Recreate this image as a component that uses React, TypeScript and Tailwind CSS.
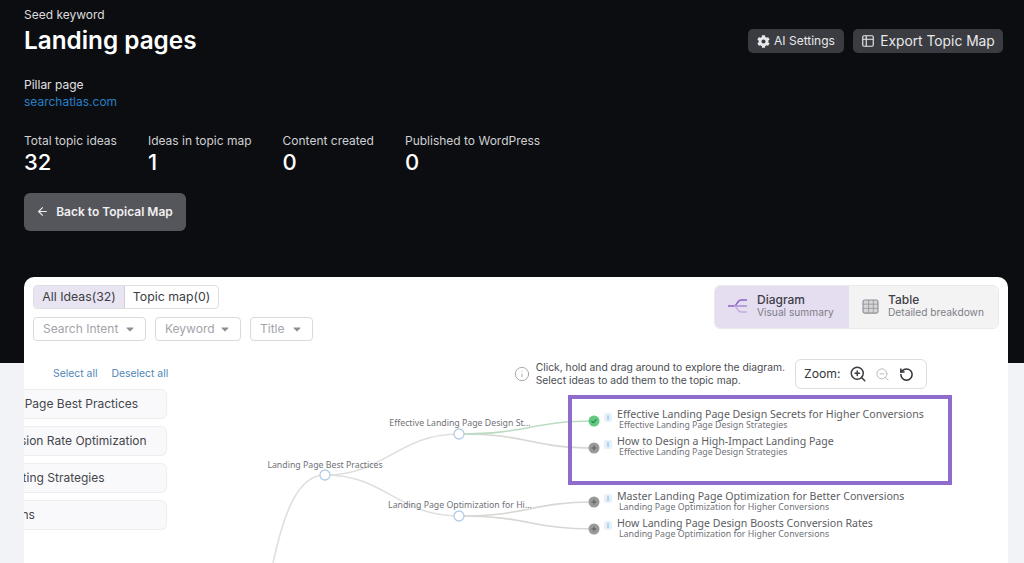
import { ArrowLeft, Info, RotateCcw, Table2, ZoomIn, ZoomOut } from "lucide-react";
import { FaCaretDown, FaCog } from "react-icons/fa";

const STATS = [
  { label: "Total topic ideas", value: "32" },
  { label: "Ideas in topic map", value: "1" },
  { label: "Content created", value: "0" },
  { label: "Published to WordPress", value: "0" },
];

const CLUSTERS = [
  { name: "Landing Page Best Practices", offset: "-ml-[48px]" },
  { name: "Conversion Rate Optimization", offset: "-ml-[45px]" },
  { name: "Marketing Strategies", offset: "-ml-[37px]" },
  { name: "Campaigns", offset: "-ml-[53px]" },
];

const LEAVES = [
  { y: 421, textY: 421, title: "Effective Landing Page Design Secrets for Higher Conversions", sub: "Effective Landing Page Design Strategies", done: true },
  { y: 448, textY: 448, title: "How to Design a High-Impact Landing Page", sub: "Effective Landing Page Design Strategies", done: false },
  { y: 502, textY: 503, title: "Master Landing Page Optimization for Better Conversions", sub: "Landing Page Optimization for Higher Conversions", done: false },
  { y: 529, textY: 530, title: "How Landing Page Design Boosts Conversion Rates", sub: "Landing Page Optimization for Higher Conversions", done: false },
];

function Filter({ label, width }: { label: string; width: string }) {
  return (
    <div className={`flex h-6 items-center justify-between rounded-[4px] border border-[#d9d9de] px-[9px] text-[12px] text-[#a2a4aa] ${width}`}>
      {label}
      <FaCaretDown className="h-[12px] w-[12px] text-[#8d8f95]" />
    </div>
  );
}

function Diagram() {
  return (
    <svg viewBox="167 359 841 204" className="absolute left-0 top-0 h-[204px] w-[841px] font-['Noto_Sans',sans-serif]">
      <g fill="none" stroke="#dfe0dd" strokeWidth="1.6">
        <path d="M273 563C284 512 298 475 325 475" />
        <path d="M325 475C385 475 398 434 459 434" />
        <path d="M325 475C385 475 398 516 459 516" />
        <path d="M459 434C530 434 530 448 594 448" stroke="#d6d8d3" />
        <path d="M459 516C530 516 530 502 594 502" stroke="#d6d8d3" />
        <path d="M459 516C530 516 530 529 594 529" stroke="#d6d8d3" />
        <path d="M459 434C530 434 530 421 594 421" stroke="#bcdcc2" />
      </g>
      {[[325, 475], [459, 434], [459, 516]].map(([cx, cy]) => (
        <circle key={cx + "-" + cy} cx={cx} cy={cy} r="5" fill="#fff" stroke="#b4cde6" strokeWidth="1.3" />
      ))}
      <g fontSize="8.75" fill="#6f7278" textAnchor="middle">
        <text x="325" y="468">Landing Page Best Practices</text>
        <text x="460" y="426">Effective Landing Page Design St...</text>
        <text x="460" y="508">Landing Page Optimization for Hi...</text>
      </g>
      {LEAVES.map((leaf) => (
        <g key={leaf.title}>
          <circle cx="594" cy={leaf.y} r="5.5" fill={leaf.done ? "#62c981" : "#9a9a9a"} />
          {leaf.done ? (
            <path d={`M591.5 ${leaf.y}l1.8 1.8 3.2-3.4`} fill="none" stroke="#2b7a45" strokeWidth="1.1" />
          ) : (
            <path d={`M591.5 ${leaf.y}h5M594 ${leaf.y - 2.5}v5`} stroke="#5c5c5c" strokeWidth="1" />
          )}
          <rect x="604" y={leaf.y - 8} width="8" height="9" rx="2" fill="#e4f1fb" />
          <text x="608" y={leaf.y - 1} fontSize="7" fill="#4b93cf" textAnchor="middle">i</text>
          <text x="617" y={leaf.textY - 3} fontSize="10.6" fill="#5b5e63">{leaf.title}</text>
          <text x="619" y={leaf.textY + 7} fontSize="8.8" fill="#6f7277">{leaf.sub}</text>
        </g>
      ))}
    </svg>
  );
}

export default function App() {
  return (
    <div className="h-[563px] w-[1024px] overflow-hidden bg-[#f2f3f6] font-['Inter',sans-serif]">
      <div className="h-[363px] bg-[#0c0d11] pl-6 pr-[21px] pt-[7px] text-white">
        <div className="flex items-start justify-between">
          <div>
            <p className="text-[12px] leading-[15px] text-[#dcdcde]">Seed keyword</p>
            <h1 className="mt-[2px] text-[24.3px] font-semibold leading-[32px]">Landing pages</h1>
          </div>
          <div className="mt-[22px] flex gap-[9px]">
            <button className="flex h-6 w-[96px] items-center justify-center gap-[4px] rounded-[5px] bg-[#3b3c41] text-[12px] text-[#e8e8ea]">
              <FaCog className="h-[13px] w-[13px]" />
              AI Settings
            </button>
            <button className="flex h-6 w-[150px] items-center justify-center gap-[5px] rounded-[5px] bg-[#3b3c41] text-[13.8px] text-[#e8e8ea]">
              <Table2 className="h-[14px] w-[14px]" />
              Export Topic Map
            </button>
          </div>
        </div>
        <p className="mt-[21px] text-[12px] leading-[16px] text-[#e0e0e2]">Pillar page</p>
        <a className="mt-[1px] block text-[12px] leading-[16px] text-[#2a7fc4]">searchatlas.com</a>
        <div className="mt-[23px] flex gap-[31px]">
          {STATS.map((stat) => (
            <div key={stat.label}>
              <p className="text-[12px] leading-[16px] text-[#cfd0d3]">{stat.label}</p>
              <p className="text-[22px] font-medium leading-[26px]">{stat.value}</p>
            </div>
          ))}
        </div>
        <button className="mt-[18px] flex h-[38px] w-[162px] items-center justify-center gap-[7px] rounded-[6px] bg-[#55565b] pb-[1px] pr-[1px] text-[12px] font-semibold text-[#f0f0f1]">
          <ArrowLeft className="h-[13px] w-[13px]" />
          Back to Topical Map
        </button>
      </div>

      <div className="ml-6 -mt-[86px] flex h-[290px] w-[984px] flex-col overflow-hidden rounded-t-[10px] bg-white">
        <div className="flex justify-between px-[9px] pt-[8px]">
          <div>
            <div className="flex h-[24px] w-fit overflow-hidden rounded-[4px] border border-[#dedee3] text-[12.3px] text-[#3c3e44]">
              <span className="flex w-[91px] items-center justify-center border-r border-[#d3d0dd] bg-[#e8e4f1]">All Ideas(32)</span>
              <span className="flex w-[93px] items-center justify-center">Topic map(0)</span>
            </div>
            <div className="mt-[8px] flex gap-[9px]">
              <Filter label="Search Intent" width="w-[113px]" />
              <Filter label="Keyword" width="w-[86px]" />
              <Filter label="Title" width="w-[63px]" />
            </div>
          </div>
          <div className="flex h-[44px] w-[285px] overflow-hidden rounded-[6px] border border-[#eaeaed]">
            <div className="flex w-[134px] items-center gap-[9px] bg-[#e5ddf0] pb-[2px] pl-[13px]">
              <svg viewBox="0 0 20 14" className="h-[14px] w-[20px]" fill="none" stroke="#8a63c4" strokeWidth="1.4">
                <path d="M0 7h6c3 0 3-6 7-6h6" />
                <path d="M6 7h13" stroke="#a98bd6" />
                <path d="M6 7c3 0 3 6 7 6h6" stroke="#c3aee2" />
              </svg>
              <div>
                <p className="text-[12px] font-medium leading-[13px] text-[#3e3f47]">Diagram</p>
                <p className="text-[10.2px] leading-[13px] text-[#7d7e88]">Visual summary</p>
              </div>
            </div>
            <div className="flex flex-1 items-center gap-[9px] bg-[#f3f3f4] pb-[2px] pl-[13px]">
              <svg viewBox="0 0 18 16" className="h-[15px] w-[17px]" fill="#d6d6d8" stroke="#8f8f93" strokeWidth="1.2">
                <rect x="1" y="1" width="16" height="14" rx="2" />
                <path d="M1 5.5h16M1 10h16M7 1v14M12 1v14" strokeWidth="0.8" />
              </svg>
              <div>
                <p className="text-[12px] font-medium leading-[13px] text-[#3e3f47]">Table</p>
                <p className="text-[10.2px] leading-[13px] text-[#7d7e88]">Detailed breakdown</p>
              </div>
            </div>
          </div>
        </div>

        <div className="mt-[18px] flex flex-1">
          <div className="w-[143px] shrink-0 pt-[8px]">
            <div className="flex gap-[14px] whitespace-nowrap pl-[29px] text-[10.4px] leading-[14px] text-[#4f86b8]">
              <span>Select all</span>
              <span>Deselect all</span>
            </div>
            <div className="mt-[8px] flex flex-col gap-[7px] overflow-hidden">
              {CLUSTERS.map((item) => (
                <div key={item.name} className="flex h-[30px] items-center overflow-hidden rounded-r-[6px] border border-l-0 border-[#eeeef1] bg-[#f9f9fb] text-[12px] text-[#44464c]">
                  <span className={`whitespace-nowrap ${item.offset}`}>{item.name}</span>
                </div>
              ))}
            </div>
          </div>

          <div className="relative flex-1">
            <Diagram />
            <div className="relative flex items-center justify-end gap-[6px] pr-[81px]">
              <Info className="h-[16px] w-[16px] text-[#9a9ca0]" strokeWidth={1.3} />
              <p className="mr-[4px] whitespace-nowrap text-[10.3px] leading-[13px] text-[#4c4e53]">
                Click, hold and drag around to explore the diagram.
                <br />
                Select ideas to add them to the topic map.
              </p>
              <div className="flex h-[30px] w-[132px] items-center rounded-[6px] border border-[#dcdde0] bg-white pl-[8px] text-[12.2px] text-[#36383d]">
                Zoom:
                <ZoomIn className="ml-[9px] h-[18px] w-[18px] text-[#3c3e43]" strokeWidth={2} />
                <ZoomOut className="ml-[8px] h-[15px] w-[15px] text-[#b4b6b9]" strokeWidth={1.5} />
                <RotateCcw className="ml-[9px] h-[15px] w-[15px] text-[#2f3135]" strokeWidth={2.4} />
              </div>
            </div>
            <div className="absolute left-[401px] top-[36px] h-[90px] w-[384px] border-[4px] border-[#8f6ccb]" />
          </div>
        </div>
      </div>
    </div>
  );
}
